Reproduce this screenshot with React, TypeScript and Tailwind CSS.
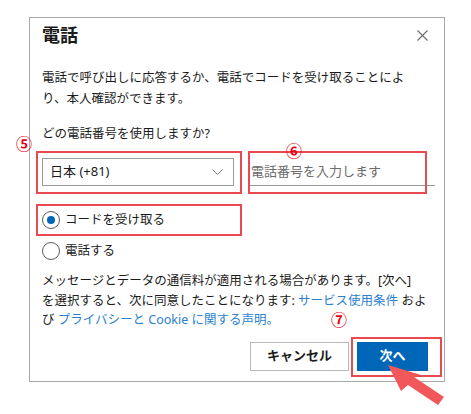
import React from 'react';

const font = { fontFamily: '"Noto Sans", "Noto Sans CJK JP", sans-serif' };

const Radio = ({ checked, label }: { checked?: boolean; label: string }) => (
  <label className="flex items-center gap-[5px] h-[18px]">
    <span className="flex items-center justify-center w-[18px] h-[18px] rounded-full border border-[#5a5a5a] bg-white">
      {checked && <span className="w-[8px] h-[8px] rounded-full bg-[#0067b8]" />}
    </span>
    <span className="text-[12.5px] text-[#1b1b1b]">{label}</span>
  </label>
);

const App = () => {
  return (
    <div className="relative w-[471px] h-[414px] bg-white overflow-hidden" style={font}>
      <div className="ml-[29px] mt-[17px] w-[416px] h-[365px] border border-[#a9a9a9] bg-white pl-[12px] pr-[8px] pt-[5px] text-[#1b1b1b]">
        <div className="flex items-center justify-between h-[24px]">
          <h2 className="text-[18px] leading-[24px] font-bold">電話</h2>
          <svg className="mr-[8px]" width="11" height="11" viewBox="0 0 11 11" fill="none" stroke="#6b6b6b" strokeWidth="1.1">
            <path d="M0.5 0.5L10.5 10.5M10.5 0.5L0.5 10.5" />
          </svg>
        </div>

        <p className="mt-[20px] text-[12.5px] leading-[21px]">
          電話で呼び出しに応答するか、電話でコードを受け取ることによ
          <br />
          り、本人確認ができます。
        </p>

        <p className="mt-[14px] text-[12.5px] leading-[21px]">どの電話番号を使用しますか?</p>

        <div className="mt-[14px] flex gap-[14px]">
          <div className="flex items-center justify-between w-[192px] h-[28px] border border-[#9a9a9a] pl-[7px] pr-[10px] text-[13px]">
            <span>日本 (+81)</span>
            <svg width="11" height="6" viewBox="0 0 11 6" fill="none" stroke="#7a7a7a" strokeWidth="1">
              <path d="M0.5 0.5L5.5 5.5L10.5 0.5" />
            </svg>
          </div>
          <div className="flex items-center w-[187px] h-[28px] border-b border-[#9a9a9a] pl-[3px] text-[13px] text-[#6b6b6b]">
            電話番号を入力します
          </div>
        </div>

        <div className="mt-[25px] flex flex-col gap-[13px]">
          <Radio checked label="コードを受け取る" />
          <Radio label="電話する" />
        </div>

        <p className="mt-[11px] text-[12.5px] leading-[19.5px]">
          メッセージとデータの通信料が適用される場合があります。[次へ]
          <br />
          を選択すると、次に同意したことになります: <span className="text-[#2b7fcf]">サービス使用条件</span> およ
          <br />
          び <span className="text-[#2b7fcf]">プライバシーと Cookie に関する声明。</span>
        </p>

        <div className="mt-[12px] mr-[8px] flex justify-end gap-[8px]">
          <button className="w-[99px] h-[29px] border border-[#b8b8b8] bg-white text-[13px] font-bold text-[#1b1b1b]">
            キャンセル
          </button>
          <button className="w-[71px] h-[29px] bg-[#0067b8] text-[13px] font-bold text-white">次へ</button>
        </div>
      </div>

      {/* annotations */}
      <div className="absolute left-[36px] top-[151px] w-[206px] h-[43px] border-2 border-[#e84a4f]" />
      <div className="absolute left-[248px] top-[151px] w-[179px] h-[43px] border-2 border-[#e84a4f]" />
      <div className="absolute left-[36px] top-[204px] w-[206px] h-[32px] border-2 border-[#e84a4f]" />
      <div className="absolute left-[351px] top-[337px] w-[91px] h-[40px] border-2 border-[#e84a4f]" />

      <span className="absolute left-[16px] top-[135px] text-[16px] leading-[18px] font-bold text-[#e60012]">⑤</span>
      <span className="absolute left-[286px] top-[142px] text-[16px] leading-[18px] font-bold text-[#e60012]">⑥</span>
      <span className="absolute left-[331px] top-[311px] text-[16px] leading-[18px] font-bold text-[#e60012]">⑦</span>

      <svg className="absolute left-0 top-0" width="471" height="414" viewBox="0 0 471 414">
        <polygon
          points="388,365 421,375 414,377 444,397 438,405 408,385 401,391"
          fill="#f2575a"
        />
      </svg>
    </div>
  );
};

export default App;
